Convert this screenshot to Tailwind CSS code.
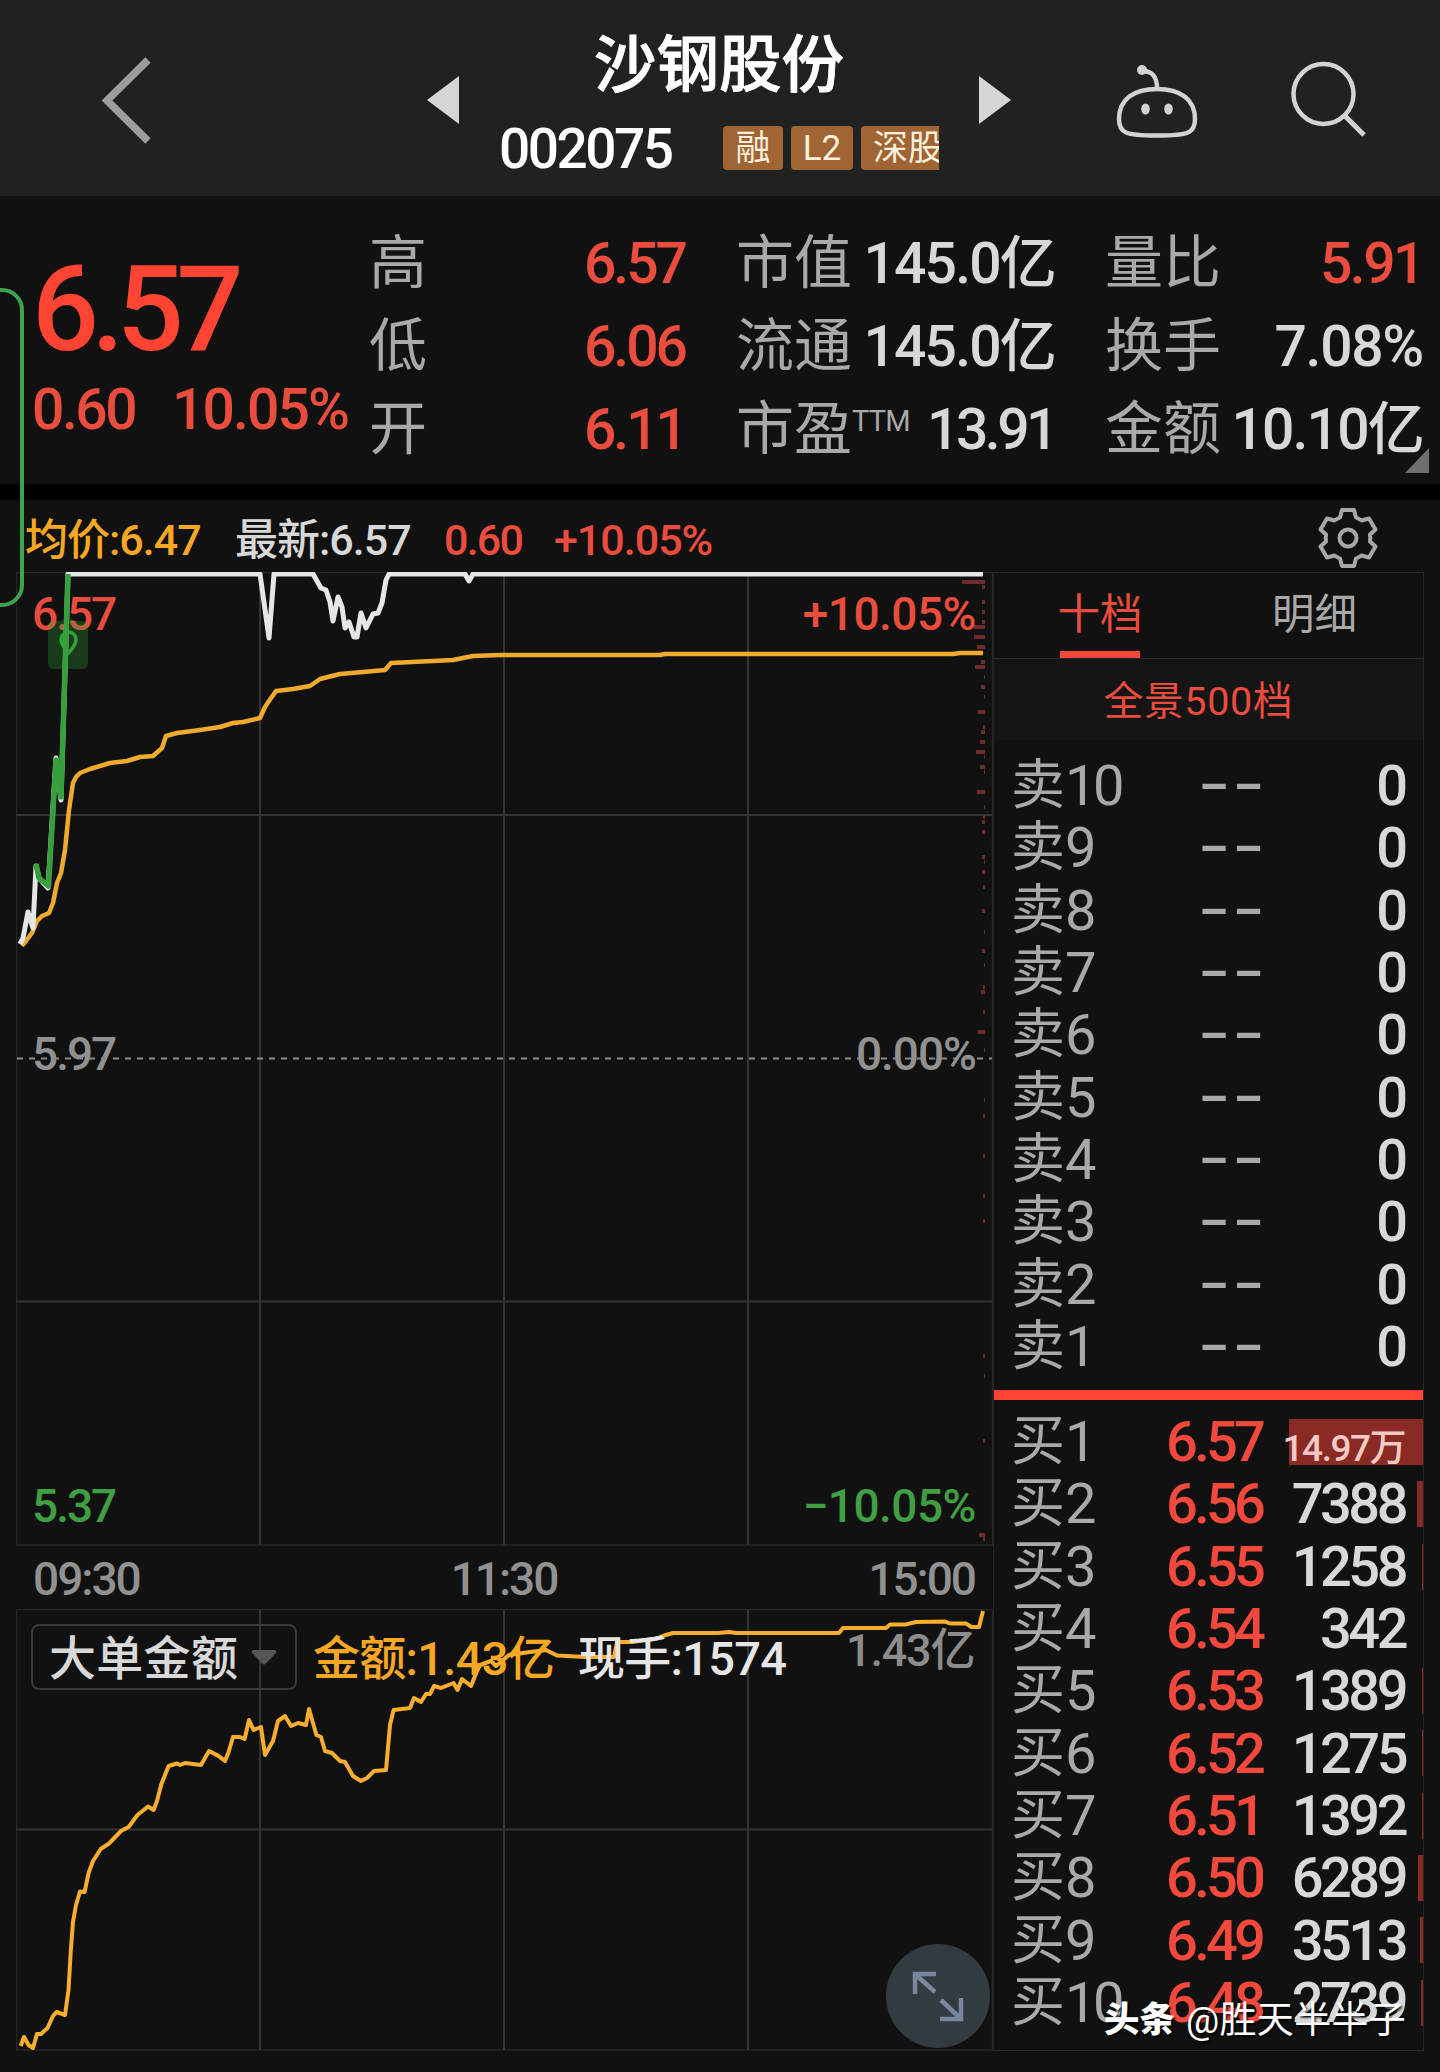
<!DOCTYPE html>
<html lang="zh-CN">
<head>
  <meta charset="UTF-8">
  <meta name="viewport" content="width=device-width, initial-scale=1.0">
  <title>沙钢股份 002075</title>
  <script src="https://cdn.jsdelivr.net/npm/@tailwindcss/browser@4"></script>
</head>
<body class="bg-[#111111] font-['Roboto','Noto_Sans_CJK_SC',sans-serif] text-[#d8d8d8]">
  <div class="relative w-[1440px] h-[2072px] overflow-hidden flex flex-col">

    <!-- 顶部导航 -->
    <header class="h-[196px] shrink-0 bg-[#202222] flex items-start">
      <svg class="w-[60px] h-[92px] mt-[54px] ml-[96px]" viewBox="96 54 60 92" fill="none" stroke="#9c9e9d" stroke-width="7.5">
        <path d="M148 60L107 100.500L148 141"></path>
      </svg>
      <svg class="w-[32px] h-[48px] mt-[76px] ml-[271px]" viewBox="0 0 32 48" fill="#d4d6d5">
        <path d="M32 0v48L0 24z"></path>
      </svg>
      <div class="w-[480px] ml-[20px] pt-[30px]">
        <h1 class="pl-[115px] h-[72px] leading-[72px] text-[62.500px] font-medium text-white whitespace-nowrap [-webkit-text-stroke:0.800px_white]">沙钢股份</h1>
        <div class="flex items-center h-[44px] mt-[24px] pl-[20px]">
          <span class="w-[225px] text-[55px] leading-[48px] pt-[2px] font-medium text-white tracking-[-2.500px]">002075</span>
          <div class="flex gap-2 w-[216px] -ml-px overflow-hidden text-[35px] leading-[45px] text-[#fdf0dc] whitespace-nowrap">
            <span class="w-[60px] h-[44px] shrink-0 rounded bg-[#a06435] text-center">融</span>
            <span class="w-[62px] h-[44px] shrink-0 rounded bg-[#a06435] text-center">L2</span>
            <span class="w-[79px] h-[44px] shrink-0 rounded-l bg-[#a06435] pl-[12px] overflow-hidden">深股</span>
          </div>
        </div>
      </div>
      <svg class="w-[32px] h-[48px] mt-[76px] ml-[20px]" viewBox="0 0 32 48" fill="#d4d6d5">
        <path d="M0 0v48L32 24z"></path>
      </svg>
      <svg class="w-[90px] h-[80px] mt-[62px] ml-[101px]" viewBox="1112 62 90 80" fill="none" stroke="#d2d3d2" stroke-width="4.500">
        <path d="M1157 89C1180 89 1195 99 1195 119C1195 133 1189 135.500 1157 135.500C1125 135.500 1119 133 1119 119C1119 99 1134 89 1157 89z"></path>
        <path d="M1143 71C1153 71 1157 78 1157 88"></path>
        <circle cx="1142" cy="70" r="5" fill="#d2d3d2" stroke="none"></circle>
        <ellipse cx="1145.500" cy="109" rx="4.300" ry="5.500" fill="#d2d3d2" stroke="none"></ellipse>
        <ellipse cx="1168.500" cy="109" rx="4.300" ry="5.500" fill="#d2d3d2" stroke="none"></ellipse>
      </svg>
      <svg class="w-[80px] h-[80px] mt-[60px] ml-[86px]" viewBox="1288 60 80 80" fill="none" stroke="#d2d3d2" stroke-width="4.500">
        <circle cx="1323.500" cy="94" r="30"></circle>
        <path d="M1344 115L1364 135" stroke-width="5"></path>
      </svg>
    </header>

    <!-- 行情概要 -->
    <section class="relative h-[288px] shrink-0 flex pt-[26px] whitespace-nowrap">
      <div class="w-[369px] pl-[32px]">
        <div class="mt-[38px] h-[100px] leading-[100px] text-[118px] font-medium text-[#ff4433] tracking-[-7.500px]">6.57</div>
        <div class="mt-[20px] h-[60px] leading-[60px] text-[57px] font-medium text-[#ea4c3e] tracking-[-2.500px] flex">
          <span class="w-[140px]">0.60</span>
          <span class="tracking-[-1.900px]">10.05%</span>
        </div>
      </div>
      <div class="w-[316px] text-[58px] leading-[83px] text-[#a9a9a9]">
        <div class="flex justify-between h-[83px]"><span>高</span><span class="text-[57px] font-medium text-[#ea4c3e] tracking-[-3px]">6.57</span></div>
        <div class="flex justify-between h-[83px]"><span>低</span><span class="text-[57px] font-medium text-[#ea4c3e] tracking-[-3px]">6.06</span></div>
        <div class="flex justify-between h-[83px]"><span>开</span><span class="text-[57px] font-medium text-[#ea4c3e] tracking-[-3px]">6.11</span></div>
      </div>
      <div class="w-[319px] ml-[51px] text-[58px] leading-[83px] text-[#a9a9a9]">
        <div class="flex justify-between h-[83px]"><span>市值</span><span class="text-[57px] font-medium text-[#d8d8d8] tracking-[-1.800px]">145.0亿</span></div>
        <div class="flex justify-between h-[83px]"><span>流通</span><span class="text-[57px] font-medium text-[#d8d8d8] tracking-[-1.800px]">145.0亿</span></div>
        <div class="flex justify-between h-[83px]"><span class="flex">市盈<span class="text-[29px] leading-[66px] tracking-[-0.800px]">TTM</span></span><span class="text-[57px] font-medium text-[#d8d8d8] tracking-[-3.500px]">13.91</span></div>
      </div>
      <div class="w-[318px] ml-[50px] text-[58px] leading-[83px] text-[#a9a9a9]">
        <div class="flex justify-between h-[83px]"><span>量比</span><span class="text-[57px] font-medium text-[#ea4c3e] tracking-[-2.500px]">5.91</span></div>
        <div class="flex justify-between h-[83px]"><span>换手</span><span class="text-[57px] font-medium text-[#d8d8d8] tracking-[-1.300px]">7.08%</span></div>
        <div class="flex justify-between h-[83px]"><span>金额</span><span class="text-[57px] font-medium text-[#d8d8d8] tracking-[-1.800px]">10.10亿</span></div>
      </div>
      <svg class="absolute right-[11px] bottom-[11px] w-[24px] h-[25px]" viewBox="0 0 24 25" fill="#6f6f6f"><path d="M24 0v25H0z"></path></svg>
    </section>

    <div class="h-[16px] shrink-0 bg-black"></div>

    <!-- 均价 / 最新 -->
    <div class="h-[72px] shrink-0 flex items-center pl-[25px] text-[43px] leading-[60px] font-medium tracking-[-1px] whitespace-nowrap">
      <span class="w-[210px] pt-[7px] text-[#f7a823]">均价:6.47</span>
      <span class="w-[209px] pt-[7px]">最新:6.57</span>
      <span class="w-[110px] pt-[7px] tracking-[-1.800px] text-[#ea4c3e]">0.60</span>
      <span class="pt-[7px] text-[#ea4c3e]">+10.05%</span>
      <svg class="w-[64px] h-[64px] ml-auto mr-[60px] mt-[4px]" viewBox="-32 -32 64 64" fill="none" stroke="#a8a8a8" stroke-width="4" stroke-linejoin="round">
        <path d="M-6 -28H6L8 -20.500A22 22 0 0 1 13.500 -17.500L21 -19.500L27.500 -8.500L22 -3.500A22 22 0 0 1 22 3.500L27.500 8.500L21 19.500L13.500 17.500A22 22 0 0 1 8 20.500L6 28H-6L-8 20.500A22 22 0 0 1 -13.500 17.500L-21 19.500L-27.500 8.500L-22 3.500A22 22 0 0 1 -22 -3.500L-27.500 -8.500L-21 -19.500L-13.500 -17.500A22 22 0 0 1 -8 -20.500z"></path>
        <circle r="8.500"></circle>
      </svg>
    </div>

    <main class="flex pl-[16px] h-[1479px] shrink-0">
      <div class="w-[977px]">
        <!-- 分时图 -->
        <div class="relative h-[973px] text-[46px] leading-[50px] font-medium tracking-[-2px]">
          <span class="absolute left-[16px] top-[17px] text-[#ea4c3e]">6.57</span>
          <span class="absolute right-[17px] top-[17px] tracking-[-0.500px] text-[#ea4c3e]">+10.05%</span>
          <span class="absolute left-[16px] top-[457px] text-[#919191]">5.97</span>
          <span class="absolute right-[17px] top-[457px] tracking-[-1px] text-[#919191]">0.00%</span>
          <span class="absolute left-[16px] top-[909px] text-[#3f9f42]">5.37</span>
          <span class="absolute right-[17px] top-[909px] tracking-[-0.500px] text-[#3f9f42]">−10.05%</span>
          <svg class="relative w-[977px] h-[974px]" viewBox="16 572 977 974" fill="none">
            <path d="M16 572.500H993M16.500 572V1545M16 1545H993M992.500 572V1545" stroke="#262626" stroke-width="1.500"></path>
            <path d="M260 572V1545M504 572V1545M748 572V1545M16 815H992M16 1301.500H992" stroke="#343434" stroke-width="2"></path>
            <path d="M17 1058.500H992" stroke="#8b8b8b" stroke-width="2" stroke-dasharray="6 6"></path>
            <g id="priceVolume" fill="#6b2c2a"></g>
            <polyline stroke="#f0ab2e" stroke-width="4.500" stroke-linejoin="round" points="22,946 32,933 37,921 42,916 49,913 53,903 57,883 61,873 65,850 69,810 73,783 76,777 80,773 90,769 110,763 127,761 140,757 153,756 162,748 166,736 177,733 200,730 220,727 233,723 243,722 260,718 265,707 269,701 276,691 293,689 310,686 320,679 340,674 363,672 385,670 391,663 433,661 453,660 473,656 500,655 660,655 665,654 953,654 960,653 983,653"></polyline>
            <polyline stroke="#e6e6e6" stroke-width="5" stroke-linejoin="round" points="20,944 23,938 28,912 33,928 36,866 39,878 48,888 56,758 61,800 68,574 260,574 269,638 274,574 313,574 321,588 326,590 330,602 333,621 338,597 342,607 345,628 349,622 354,637 357,637 361,613 366,628 373,614 378,613 382,603 386,580 389,574 465,574 469,581 473,574 983,574"></polyline>
            <path d="M54 621H61L68 616L75 621H82Q88 621 88 627V663Q88 669 82 669H54Q48 669 48 663V627Q48 621 54 621z" fill="#2f9e36" fill-opacity="0.300"></path>
            <path d="M68.500 653C63 647 61 643 61 639.500A7.500 7.500 0 0 1 76 639.500C76 643 74 647 68.500 653z" stroke="#2fa338" stroke-width="3.500"></path>
            <polyline stroke="#37a03c" stroke-width="5.500" stroke-linejoin="round" points="36,864 39,878 48.500,886 56,760 61,797 68,574"></polyline>
          </svg>
        </div>

        <!-- 时间轴 -->
        <div class="h-[64px] flex items-center justify-between pl-[17px] pr-[18px] text-[46px] leading-[64px] pt-[4px] tracking-[-2px] font-medium text-[#919191]">
          <span>09:30</span><span>11:30</span><span>15:00</span>
        </div>

        <!-- 大单金额 -->
        <div class="relative h-[441px]">
          <svg class="absolute inset-0 w-[977px] h-[442px]" viewBox="16 1609 977 442" fill="none">
            <path d="M16 1609.500H993M16.500 1609V2050M16 2050H993M992.500 1609V2050" stroke="#262626" stroke-width="1.500"></path>
            <path d="M260 1609V2050M504 1609V2050M748 1609V2050M16 1829.500H992" stroke="#343434" stroke-width="2"></path>
            <polyline stroke="#f7ae2e" stroke-width="4" stroke-linejoin="round" points="20.700,2046 24,2037 28.500,2045 33,2048 37,2034 41,2034 47.500,2028 53,2016 56.500,2012 65,2015 68.500,1990 70.700,1952 73,1922 76,1905 80,1891.500 84.600,1892 88.600,1873 93,1861 100.700,1849 109,1843.500 121,1831 128.600,1827 137.500,1815 148,1806.500 153.600,1810 157,1801 161.400,1784 168.600,1766 177,1763.500 180,1765 185,1763 201,1765 209,1751 218,1755.600 225,1761 228.600,1752 233,1737 240,1737 244.600,1739 249,1720 253.600,1730 261,1727 265,1755 273,1741 278,1721 285,1716 291,1726 298,1723 306,1725 309,1709 316.400,1735 321,1737 325,1751 332,1753 340,1761 345,1762 353,1776 361,1781 367,1778 374,1771 386,1770 390,1725 393.600,1710 410,1708 414,1698 421,1702 426,1694 430,1694 434,1686 441,1688 453.600,1683 457.500,1690 462,1679 471,1686 477,1671 480,1665 491,1661 496,1666 502,1661 509,1655 530,1652 546,1650 557,1655.500 586,1657 614,1657 617,1642 632,1642 657,1638.500 664,1635.500 673,1633 718,1633 729,1632 736,1633 839,1633 843,1628 886,1628 890,1624.600 905,1624.600 916,1622 945,1621.600 950,1623.500 966,1623.500 971.500,1627 979,1627 983,1611"></polyline>
          </svg>
          <div class="relative flex items-center pl-[15px] pt-[15px] text-[47px] leading-[60px] font-medium tracking-[-0.700px] whitespace-nowrap">
            <div class="w-[266px] h-[66px] shrink-0 rounded-lg border-2 border-[#3a3a3a] flex items-center pl-[16px] tracking-[0.300px]">
              <span class="pt-[4px]">大单金额</span>
              <svg class="w-[26px] h-[15px] ml-[13px]" viewBox="0 0 26 15" fill="#555555"><path d="M2 0H24Q26 1 25 3L15 13.500Q13 15.500 11 13.500L1 3Q0 1 2 0z"></path></svg>
            </div>
            <span class="w-[265px] ml-[16px] pt-[4px] text-[#f7a823]">金额:1.43亿</span>
            <span class="w-[255px] pt-[4px] text-[#e6e6e6]">现手:1574</span>
            <span class="ml-[13px] -mt-[12px] text-[#8c8c8c] text-[45px] font-medium tracking-[-1.200px]">1.43亿</span>
          </div>
          <button class="absolute right-[3px] bottom-[2px] w-[104px] h-[104px] rounded-full bg-[#323b3f]">
            <svg class="w-[104px] h-[104px]" viewBox="886 1944 104 104" fill="none" stroke="#79879f" stroke-width="4.500">
              <path d="M936 1974H915V1994M916 1975L935 1992M940 2019H961V1998M960 2018L941 2000"></path>
            </svg>
          </button>
        </div>
      </div>

      <!-- 十档盘口 -->
      <aside class="w-[431px] border border-[#262626]">
        <div class="flex h-[86px] border-b border-[#2a2a2a] text-[42.500px] leading-[83px]">
          <div class="w-[212px] flex flex-col items-center text-[#ea4c3e]">
            <span class="h-[78px]">十档</span>
            <span class="w-[80px] h-[7px] bg-[#f3483c]"></span>
          </div>
          <div class="w-[217px] text-center text-[#a9a9a9]">明细</div>
        </div>
        <div class="h-[81px] bg-[#151515] text-center pr-[20px] text-[39.500px] leading-[86px] tracking-[0.700px] text-[#ea4c3e]">全景500档</div>
        <div id="sellRows" class="pt-[15px] h-[650px]"></div>
        <div class="h-[10px] bg-[#ff4433]"></div>
        <div id="buyRows" class="pt-[11px]"></div>
      </aside>
    </main>

    <!-- 左侧悬浮框 -->
    <div class="absolute -left-[40px] top-[288px] w-[64px] h-[319px] rounded-[22px] border-4 border-[#3fa34d]"></div>

    <!-- 水印 -->
    <div class="absolute left-[1104px] top-[1996px] flex items-center h-[50px] text-white whitespace-nowrap [text-shadow:2px_2px_2px_rgba(0,0,0,0.700)]">
      <span class="text-[35.500px] font-black">头条</span>
      <span class="ml-[11px] text-[37px] tracking-[0.300px]">@胜天半半子</span>
    </div>
  </div>

  <script>
    const sells = [10, 9, 8, 7, 6, 5, 4, 3, 2, 1];
    const buys = [
      { price: '6.57', qty: '14.97万', bar: 134, small: true },
      { price: '6.56', qty: '7388', bar: 6 },
      { price: '6.55', qty: '1258', bar: 1 },
      { price: '6.54', qty: '342', bar: 0 },
      { price: '6.53', qty: '1389', bar: 1 },
      { price: '6.52', qty: '1275', bar: 1 },
      { price: '6.51', qty: '1392', bar: 1 },
      { price: '6.50', qty: '6289', bar: 5 },
      { price: '6.49', qty: '3513', bar: 3 },
      { price: '6.48', qty: '2739', bar: 2 }
    ];

    // 卖盘
    document.getElementById('sellRows').innerHTML = sells.map(n => `
      <div class="flex items-center h-[62.300px] pl-[17px] pr-[15px] leading-[62px]">
        <span class="w-[188px] flex text-[#a9a9a9]"><span class="text-[54px]">卖</span><span class="text-[56px] tracking-[-3.500px]">${n}</span></span>
        <span class="-mt-[4px] text-[56px] font-medium text-[#a9a9a9] tracking-[2.500px] origin-left scale-x-[1.600]">--</span>
        <span class="ml-auto text-[56px] font-medium">0</span>
      </div>`).join('');

    // 买盘
    document.getElementById('buyRows').innerHTML = buys.map((b, i) => `
      <div class="relative flex items-center h-[62.300px] pl-[17px] pr-[18px] leading-[62px]">
        <span class="absolute right-0 top-[8px] h-[46px] bg-[#892b24]" style="width:${b.bar}px"></span>
        <span class="w-[155px] flex text-[#a9a9a9]"><span class="text-[54px]">买</span><span class="text-[56px] tracking-[-3.500px]">${i + 1}</span></span>
        <span class="text-[56px] font-medium text-[#f3483c] tracking-[-3.700px]">${b.price}</span>
        ${b.small
          ? `<span class="relative ml-auto pt-[13px] text-[37px] leading-[54px] font-medium text-[#f5c9c5] tracking-[-1.500px]">${b.qty}</span>`
          : `<span class="relative ml-auto text-[56px] font-medium tracking-[-3.500px]">${b.qty}</span>`}
      </div>`).join('');

    // 价格分布: [y, 宽度]
    const ticks = [
      [582, 23], [587, 3], [602, 3], [612, 3], [622, 3], [627, 11], [637, 11], [647, 8], [662, 4], [667, 10],
      [677, 1], [687, 4], [697, 1], [712, 7], [727, 2], [732, 4], [742, 5], [752, 9], [757, 1], [767, 5],
      [772, 1], [792, 8], [807, 1], [817, 2], [822, 3], [832, 3], [857, 3], [862, 1], [872, 3], [887, 2],
      [911, 3], [932, 1], [951, 3], [965, 1], [987, 2], [992, 4], [1012, 2], [1032, 7], [1050, 1], [1100, 1],
      [1116, 2], [1156, 2], [1196, 2], [1221, 2], [1356, 2], [1376, 1], [1441, 2], [1535, 6], [1539, 2]
    ];
    document.getElementById('priceVolume').innerHTML = ticks
      .map(([y, w]) => `<rect x="${985 - w}" y="${y - 2}" width="${w}" height="4"></rect>`).join('');
  </script>
</body>
</html>
